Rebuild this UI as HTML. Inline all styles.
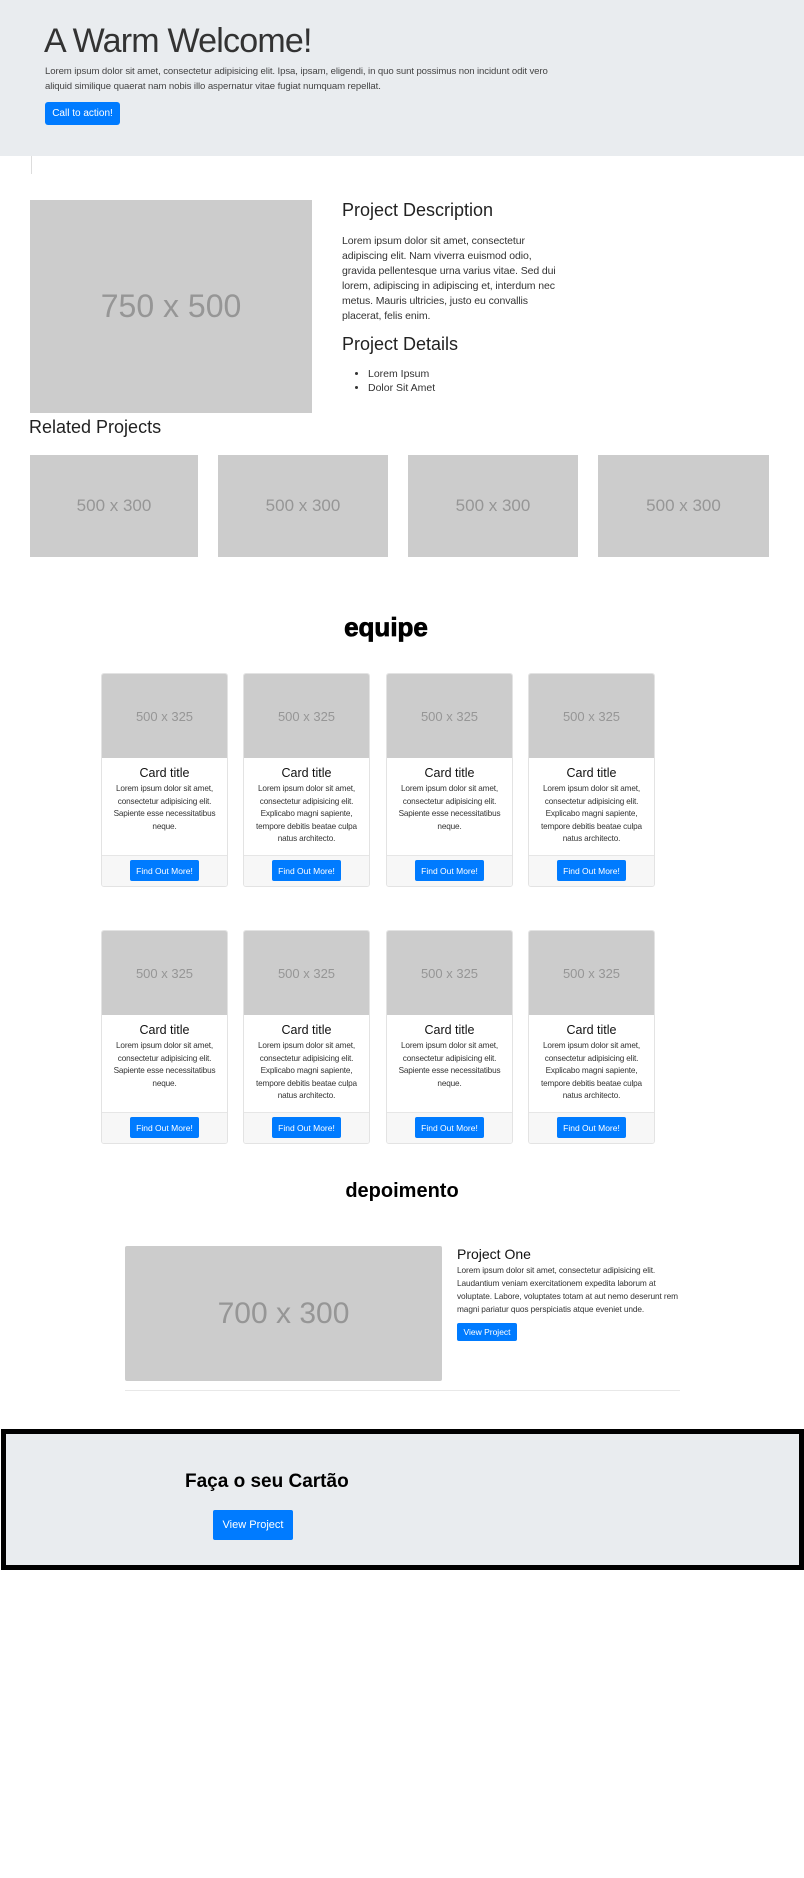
<!DOCTYPE html>
<html><head><meta charset="utf-8"><style>
*{margin:0;padding:0;box-sizing:border-box}
body{width:804px;height:1878px;position:relative;background:#fff;font-family:"Liberation Sans",sans-serif;color:#212529;overflow:hidden}
.a{position:absolute}
.ph{position:absolute;background:#ccc;color:#969696;display:flex;align-items:center;justify-content:center}
.btn{position:absolute;background:#007bff;color:#fff;border-radius:3px;display:flex;align-items:center;justify-content:center}
.card{position:absolute;width:127px;height:214px;border:1px solid #e3e3e3;border-radius:3px;background:#fff;overflow:hidden}
.card .img{position:absolute;left:0;top:0;width:125px;height:84px;background:#ccc;color:#969696;font-size:13px;display:flex;align-items:center;justify-content:center}
.card .t{position:absolute;top:92px;width:125px;text-align:center;font-size:12.5px;color:#111}
.card .p{position:absolute;top:109px;left:9px;width:107px;text-align:center;font-size:8.2px;line-height:12.6px;color:#333;letter-spacing:-0.15px}
.card .f{position:absolute;left:0;bottom:0;width:125px;height:31px;background:#f7f7f7;border-top:1px solid #e6e6e6}
.card .b{position:absolute;left:28px;top:4px;width:69px;height:21px;background:#007bff;color:#fff;font-size:8.5px;border-radius:2px;display:flex;align-items:center;justify-content:center}
</style></head><body>
<div class="a" style="left:0;top:0;width:804px;height:156px;background:#e9ecef"></div>
<div class="a" style="left:44px;top:21px;font-size:34px;letter-spacing:-0.8px;color:#333;line-height:40px">A Warm Welcome!</div>
<div class="a" style="left:45px;top:64px;width:528px;font-size:9.6px;line-height:15px;color:#444;letter-spacing:-0.1px">Lorem ipsum dolor sit amet, consectetur adipisicing elit. Ipsa, ipsam, eligendi, in quo sunt possimus non incidunt odit vero aliquid similique quaerat nam nobis illo aspernatur vitae fugiat numquam repellat.</div>
<div class="btn" style="left:45px;top:102px;width:75px;height:23px;font-size:10px">Call to action!</div>
<div class="a" style="left:31px;top:156px;width:1px;height:18px;background:#ddd"></div>

<div class="ph" style="left:30px;top:200px;width:282px;height:213px;font-size:32px">750 x 500</div>
<div class="a" style="left:342px;top:200px;font-size:18px;color:#222">Project Description</div>
<div class="a" style="left:342px;top:234px;width:225px;font-size:10.5px;line-height:15px;color:#333;letter-spacing:-0.1px">Lorem ipsum dolor sit amet, consectetur adipiscing elit. Nam viverra euismod odio, gravida pellentesque urna varius vitae. Sed dui lorem, adipiscing in adipiscing et, interdum nec metus. Mauris ultricies, justo eu convallis placerat, felis enim.</div>
<div class="a" style="left:342px;top:334px;font-size:18px;color:#222">Project Details</div>
<ul class="a" style="left:368px;top:367px;font-size:10.5px;line-height:14px;color:#333">
<li>Lorem Ipsum</li><li>Dolor Sit Amet</li></ul>
<div class="a" style="left:29px;top:417px;font-size:18px;color:#222">Related Projects</div>
<div class="ph" style="left:30px;top:455px;width:168px;height:102px;font-size:17px">500 x 300</div>
<div class="ph" style="left:218px;top:455px;width:170px;height:102px;font-size:17px">500 x 300</div>
<div class="ph" style="left:408px;top:455px;width:170px;height:102px;font-size:17px">500 x 300</div>
<div class="ph" style="left:598px;top:455px;width:171px;height:102px;font-size:17px">500 x 300</div>

<div class="a" style="left:0;top:612px;width:772px;text-align:center;font-size:26px;font-weight:900;color:#000;-webkit-text-stroke:0.8px #000">equipe</div>

<div class="card" style="left:101px;top:673px"><div class="img">500 x 325</div><div class="t">Card title</div><div class="p">Lorem ipsum dolor sit amet, consectetur adipisicing elit. Sapiente esse necessitatibus neque.</div><div class="f"><div class="b">Find Out More!</div></div></div>
<div class="card" style="left:243px;top:673px"><div class="img">500 x 325</div><div class="t">Card title</div><div class="p">Lorem ipsum dolor sit amet, consectetur adipisicing elit. Explicabo magni sapiente, tempore debitis beatae culpa natus architecto.</div><div class="f"><div class="b">Find Out More!</div></div></div>
<div class="card" style="left:386px;top:673px"><div class="img">500 x 325</div><div class="t">Card title</div><div class="p">Lorem ipsum dolor sit amet, consectetur adipisicing elit. Sapiente esse necessitatibus neque.</div><div class="f"><div class="b">Find Out More!</div></div></div>
<div class="card" style="left:528px;top:673px"><div class="img">500 x 325</div><div class="t">Card title</div><div class="p">Lorem ipsum dolor sit amet, consectetur adipisicing elit. Explicabo magni sapiente, tempore debitis beatae culpa natus architecto.</div><div class="f"><div class="b">Find Out More!</div></div></div>

<div class="card" style="left:101px;top:930px"><div class="img">500 x 325</div><div class="t">Card title</div><div class="p">Lorem ipsum dolor sit amet, consectetur adipisicing elit. Sapiente esse necessitatibus neque.</div><div class="f"><div class="b">Find Out More!</div></div></div>
<div class="card" style="left:243px;top:930px"><div class="img">500 x 325</div><div class="t">Card title</div><div class="p">Lorem ipsum dolor sit amet, consectetur adipisicing elit. Explicabo magni sapiente, tempore debitis beatae culpa natus architecto.</div><div class="f"><div class="b">Find Out More!</div></div></div>
<div class="card" style="left:386px;top:930px"><div class="img">500 x 325</div><div class="t">Card title</div><div class="p">Lorem ipsum dolor sit amet, consectetur adipisicing elit. Sapiente esse necessitatibus neque.</div><div class="f"><div class="b">Find Out More!</div></div></div>
<div class="card" style="left:528px;top:930px"><div class="img">500 x 325</div><div class="t">Card title</div><div class="p">Lorem ipsum dolor sit amet, consectetur adipisicing elit. Explicabo magni sapiente, tempore debitis beatae culpa natus architecto.</div><div class="f"><div class="b">Find Out More!</div></div></div>

<div class="a" style="left:0;top:1180px;width:804px;text-align:center;font-size:20px;font-weight:bold;color:#000">depoimento</div>
<div class="ph" style="left:125px;top:1246px;width:317px;height:135px;font-size:30px;border-radius:2px">700 x 300</div>
<div class="a" style="left:457px;top:1246px;font-size:14px;color:#111">Project One</div>
<div class="a" style="left:457px;top:1264px;width:222px;font-size:8.3px;line-height:13px;color:#333;letter-spacing:-0.1px">Lorem ipsum dolor sit amet, consectetur adipisicing elit. Laudantium veniam exercitationem expedita laborum at voluptate. Labore, voluptates totam at aut nemo deserunt rem magni pariatur quos perspiciatis atque eveniet unde.</div>
<div class="btn" style="left:457px;top:1323px;width:60px;height:18px;font-size:8.5px;border-radius:2px">View Project</div>
<div class="a" style="left:125px;top:1390px;width:555px;height:1px;background:#e8e8e8"></div>

<div class="a" style="left:1px;top:1429px;width:803px;height:141px;background:#e9ecef;border:5px solid #000"></div>
<div class="a" style="left:185px;top:1471px;font-size:19px;font-weight:bold;color:#000">Faça o seu Cartão</div>
<div class="btn" style="left:213px;top:1510px;width:80px;height:30px;font-size:11px;border-radius:2px">View Project</div>
</body></html>
